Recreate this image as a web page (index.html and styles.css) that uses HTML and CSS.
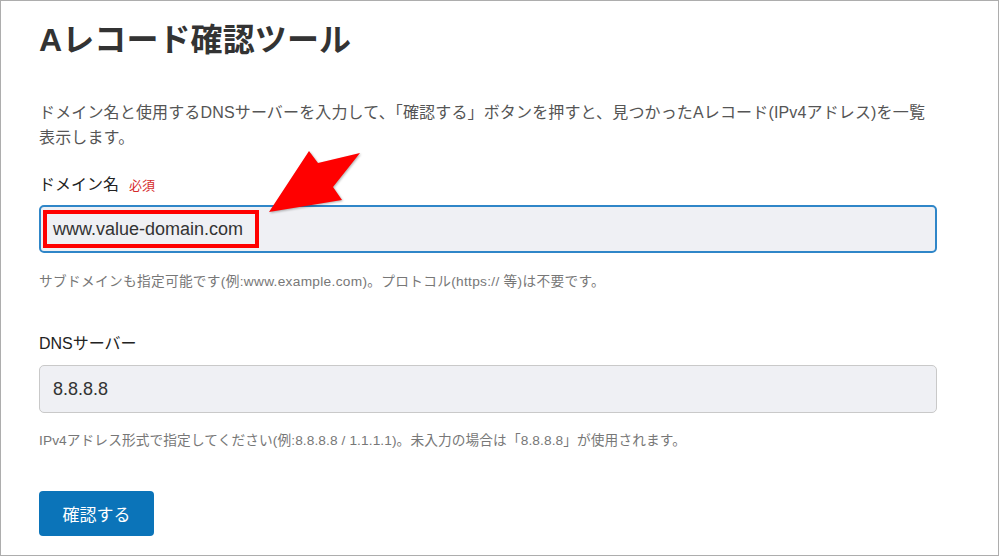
FILE: index.html
```html
<!DOCTYPE html>
<html lang="ja">
<head>
<meta charset="utf-8">
<title>Aレコード確認ツール</title>
<link rel="stylesheet" href="styles.css">
</head>
<body>
<div class="frame">
  <h1 class="title">Aレコード確認ツール</h1>
  <p class="desc">ドメイン名と使用するDNSサーバーを入力して、「確認する」ボタンを押すと、見つかったAレコード(IPv4アドレス)を一覧<br>表示します。</p>

  <div class="label label-first">ドメイン名<span class="req">必須</span></div>
  <div class="field field-focus"><span class="mark">www.value-domain.com</span></div>
  <p class="help help-first">サブドメインも指定可能です(例:www.example.com)。プロトコル(https:// 等)は不要です。</p>

  <div class="label label-second">DNSサーバー</div>
  <div class="field field-plain"><span class="val">8.8.8.8</span></div>
  <p class="help help-second">IPv4アドレス形式で指定してください(例:8.8.8.8 / 1.1.1.1)。未入力の場合は「8.8.8.8」が使用されます。</p>

  <button class="btn" type="button">確認する</button>

  <svg class="arrow" width="120" height="90" viewBox="250 140 120 90" aria-hidden="true">
    <polygon points="269,212 309,151 318,163 360,153 333,187 342,200" fill="#ff0000"/>
  </svg>
</div>
</body>
</html>
```

FILE: styles.css
```css
html, body {
  margin: 0;
  padding: 0;
  background: #ffffff;
}

.frame {
  position: relative;
  box-sizing: border-box;
  width: 999px;
  height: 556px;
  border: 1px solid #adadad;
  padding: 19px 0 0 38px;
  font-family: "Liberation Sans", "Noto Sans CJK JP", sans-serif;
  color: #222;
  overflow: hidden;
}

.title {
  margin: 0;
  font-size: 32px;
  line-height: 40px;
  font-weight: 700;
  color: #333;
  letter-spacing: 0.1px;
}

.desc {
  margin: 40px 0 0 0;
  width: 898px;
  font-size: 16px;
  line-height: 25px;
  color: #555;
  letter-spacing: 0.15px;
  white-space: nowrap;
}

.label {
  font-size: 16px;
  line-height: 24px;
  color: #222;
}

.label-first {
  margin-top: 23px;
}

.label-second {
  margin-top: 40px;
}

.req {
  margin-left: 10px;
  font-size: 13px;
  color: #d62b2b;
}

.field {
  box-sizing: border-box;
  width: 898px;
  height: 48px;
  border-radius: 5px;
  background: #eff0f4;
  display: flex;
  align-items: center;
  font-size: 18px;
  color: #333;
}

.field-focus {
  margin-top: 7px;
  border: 2px solid #2f86c8;
  padding-left: 2px;
}

.field-plain {
  margin-top: 9px;
  border: 1px solid #c9c9c9;
  padding-left: 13px;
}

.mark {
  box-sizing: border-box;
  height: 38px;
  display: flex;
  align-items: center;
  border: 4px solid #ff0000;
  padding: 0 12px 0 6px;
}

.help {
  margin: 19px 0 0 0;
  font-size: 13.7px;
  line-height: 20px;
  color: #777;
}

.help-first {
  letter-spacing: 0.3px;
}

.help-second {
  margin-top: 18px;
  letter-spacing: 0.1px;
}

.btn {
  display: flex;
  align-items: center;
  justify-content: center;
  margin-top: 40px;
  width: 115px;
  height: 45px;
  border: none;
  border-radius: 4px;
  background: #0b74b9;
  color: #fff;
  font-family: "Liberation Sans", "Noto Sans CJK JP", sans-serif;
  font-size: 17px;
  padding: 0;
}

.arrow {
  position: absolute;
  left: 249px;
  top: 139px;
  filter: drop-shadow(1px 1px 1px rgba(0, 0, 0, 0.3));
}
```
